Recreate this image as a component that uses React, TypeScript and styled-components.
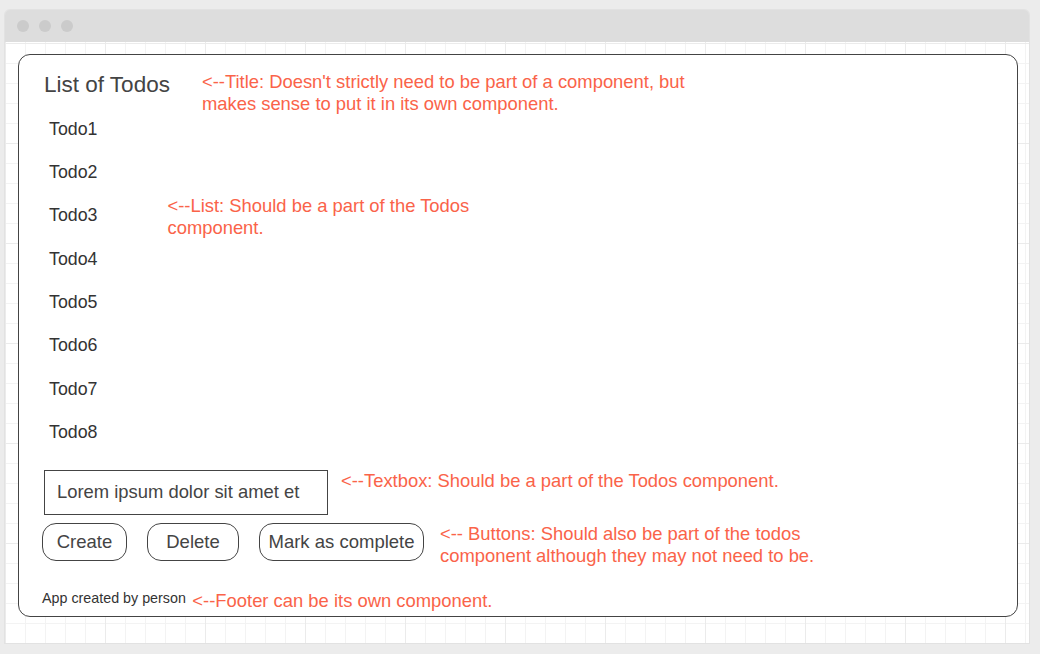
import React from 'react';
import styled, { createGlobalStyle } from 'styled-components';

const GlobalStyle = createGlobalStyle`
    html, body {
        margin: 0;
        padding: 0;
        background: #ececec;
    }
    body {
        font-family: "Liberation Sans", Arial, sans-serif;
    }
`;

const Page = styled.div`
    width: 1040px;
    height: 654px;
    box-sizing: border-box;
    padding: 10px 11px 0 5px;
`;

const Window = styled.div`
    width: 1024px;
    height: 633px;
    display: flex;
    flex-direction: column;
    border-radius: 5px 5px 0 0;
    overflow: hidden;
    box-shadow: 0 0 0 1px #e2e2e2;
`;

const TitleBar = styled.div`
    height: 32px;
    flex: none;
    background: #dddddd;
    display: flex;
    align-items: center;
    gap: 10px;
    padding-left: 12px;
`;

const Dot = styled.span`
    width: 12px;
    height: 12px;
    border-radius: 50%;
    background: #cbcbcb;
`;

const Canvas = styled.div`
    flex: 1;
    box-sizing: border-box;
    padding: 12px 0 0 13px;
    background-color: #ffffff;
    background-image:
        linear-gradient(to right, #ebebeb 1px, transparent 1px),
        linear-gradient(to bottom, #ebebeb 1px, transparent 1px),
        linear-gradient(to right, #f3f3f3 1px, transparent 1px),
        linear-gradient(to bottom, #f3f3f3 1px, transparent 1px);
    background-size: 100px 100px, 100px 100px, 20px 20px, 20px 20px;
    background-position: 0 1px, 0 1px, 0 1px, 0 1px;
`;

const Card = styled.div`
    width: 1000px;
    height: 563px;
    box-sizing: border-box;
    background: #ffffff;
    border: 1px solid #444;
    border-radius: 12px;
    padding: 17px 0 4px 23px;
    display: flex;
    flex-direction: column;
`;

const Note = styled.div<{ $left: number; $top?: number }>`
    color: #fa6349;
    font-size: 18.4px;
    line-height: 22px;
    margin-left: ${ props => props.$left }px;
    margin-top: ${ props => props.$top || 0 }px;
    white-space: nowrap;
`;

const TitleRow = styled.div`
    height: 35px;
    display: flex;
    align-items: flex-start;
`;

const Title = styled.h1`
    margin: 0 0 0 2px;
    font-size: 22.5px;
    line-height: 26px;
    font-weight: normal;
    color: #444;
`;

const List = styled.ul`
    list-style: none;
    margin: 0;
    padding: 0 0 0 7px;
`;

const Row = styled.li`
    height: 43.33px;
    display: flex;
    align-items: center;
`;

const Label = styled.span`
    font-size: 17.8px;
    line-height: 20px;
    color: #333;
`;

const InputRow = styled.div`
    display: flex;
    align-items: flex-start;
    margin-top: 16.3px;
    padding-left: 2px;
`;

const TextBox = styled.input`
    width: 284px;
    height: 45px;
    box-sizing: border-box;
    border: 1px solid #444;
    border-radius: 0;
    padding: 0 12px;
    margin: 0;
    font-family: "Liberation Sans", Arial, sans-serif;
    font-size: 18.4px;
    color: #444;
    outline: none;
`;

const ButtonRow = styled.div`
    display: flex;
    align-items: flex-start;
    margin-top: 8px;
`;

const Buttons = styled.div`
    display: flex;
    gap: 20px;
`;

const Button = styled.button<{ $width: number }>`
    width: ${ props => props.$width }px;
    height: 38px;
    padding: 0;
    border: 1px solid #444;
    border-radius: 14px;
    background: #fff;
    font-family: "Liberation Sans", Arial, sans-serif;
    font-size: 18.5px;
    color: #444;
    cursor: pointer;
`;

const Footer = styled.footer`
    margin-top: auto;
    display: flex;
    align-items: flex-start;
`;

const Credit = styled.span`
    font-size: 14.3px;
    line-height: 17px;
    color: #333;
    margin-top: -0.5px;
`;

const todos = ['Todo1', 'Todo2', 'Todo3', 'Todo4', 'Todo5', 'Todo6', 'Todo7', 'Todo8'];

function Todos() {
    return (
        <>
            <List>
                {todos.map(todo => (
                    <Row key={todo}>
                        <Label>{todo}</Label>
                        {todo === 'Todo3' && (
                            <Note $left={70} style={{ alignSelf: 'flex-start' }} $top={1}>
                                &lt;--List: Should be a part of the Todos<br />component.
                            </Note>
                        )}
                    </Row>
                ))}
            </List>
            <InputRow>
                <TextBox defaultValue="Lorem ipsum dolor sit amet et" />
                <Note $left={13} $top={0.5}>&lt;--Textbox: Should be a part of the Todos component.</Note>
            </InputRow>
            <ButtonRow>
                <Buttons>
                    <Button $width={85}>Create</Button>
                    <Button $width={92}>Delete</Button>
                    <Button $width={165}>Mark as complete</Button>
                </Buttons>
                <Note $left={16}>
                    &lt;-- Buttons: Should also be part of the todos<br />
                    component although they may not need to be.
                </Note>
            </ButtonRow>
        </>
    );
}

export default function App() {
    return (
        <Page>
            <GlobalStyle />
            <Window>
                <TitleBar>
                    <Dot />
                    <Dot />
                    <Dot />
                </TitleBar>
                <Canvas>
                    <Card>
                        <TitleRow>
                            <Title>List of Todos</Title>
                            <Note $left={32} $top={-1}>
                                &lt;--Title: Doesn't strictly need to be part of a component, but<br />
                                makes sense to put it in its own component.
                            </Note>
                        </TitleRow>
                        <Todos />
                        <Footer>
                            <Credit>App created by person</Credit>
                            <Note $left={6.5}>&lt;--Footer can be its own component.</Note>
                        </Footer>
                    </Card>
                </Canvas>
            </Window>
        </Page>
    );
}
